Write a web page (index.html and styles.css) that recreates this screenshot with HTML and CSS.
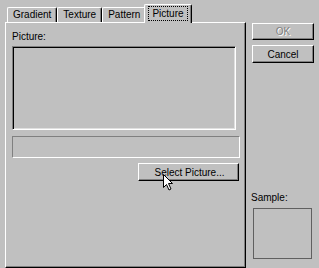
FILE: index.html
```html
<!DOCTYPE html>
<html lang="en">
<head>
    <meta charset="UTF-8">
    <meta name="viewport" content="width=device-width, initial-scale=1.0">
    <title>Fill Effects</title>
    <link rel="stylesheet" href="styles.css">
</head>
<body>
    <div id="dialog">
        <div id="leftSide">
            <div id="tabs">
                <div class="tab">Gradient</div>
                <div class="tab">Texture</div>
                <div class="tab">Pattern</div>
                <div class="tab selected"><span class="focusRect">Picture</span></div>
            </div>
            <div id="panel">
                <div class="label">Picture:</div>
                <div id="pictureBox"></div>
                <div id="fileField"></div>
                <button id="selectButton" class="button">Select Picture...</button>
                <!-- mouse pointer resting on the button -->
                <svg id="cursor" width="11" height="17" viewBox="0 0 11 17">
                    <path d="M0.5 0.5 L0.5 13.5 L3.5 10.5 L6 16 L8 15 L5.5 9.5 L9.5 9.5 Z" fill="#fff" stroke="#000" stroke-width="1"/>
                </svg>
            </div>
        </div>

        <div id="rightSide">
            <button class="button disabled">OK</button>
            <button class="button" id="cancelButton">Cancel</button>
            <div class="label" id="sampleLabel">Sample:</div>
            <div id="sampleBox"></div>
        </div>
    </div>
</body>
</html>
```

FILE: styles.css
```css
body {
    margin: 0;
    padding: 0;
    background-color: #c0c0c0;
    font-family: "Liberation Sans", Arial, sans-serif;
    font-size: 10px;
    color: #000;
    width: 319px;
    height: 268px;
    overflow: hidden;
}

#dialog {
    display: flex;
    padding: 4px 0 0 5px;
}

#leftSide {
    width: 241px;
}

#tabs {
    display: flex;
    align-items: flex-end;
    height: 18px;
    padding-left: 2px;
}

.tab {
    position: relative;
    height: 14px;
    line-height: 14px;
    padding: 0 5px 0 5px;
    border-top: 1px solid #fff;
    border-left: 1px solid #fff;
    border-right: 1px solid #000;
    border-radius: 2px 2px 0 0;
    box-shadow: inset -1px 0 0 #808080;
    white-space: nowrap;
}

.tab.selected {
    height: 18px;
    line-height: 17px;
    margin: 0 0 -1px -2px;
    padding: 0 3px 0 3px;
    background-color: #c0c0c0;
    z-index: 1;
}

.focusRect {
    display: inline-block;
    line-height: 11px;
    padding: 1px 3px;
    border: 1px dotted #000;
}

#panel {
    position: relative;
    height: 236px;
    padding: 8px 0 0 6px;
    border-top: 1px solid #fff;
    border-left: 1px solid #fff;
    border-right: 1px solid #000;
    border-bottom: 1px solid #000;
    box-shadow: inset -1px -1px 0 #808080;
    box-sizing: content-box;
    width: 233px;
}

.label {
    line-height: 12px;
    height: 12px;
}

#pictureBox {
    margin-top: 3px;
    width: 222px;
    height: 82px;
    border-top: 1px solid #808080;
    border-left: 1px solid #808080;
    border-right: 1px solid #fff;
    border-bottom: 1px solid #fff;
    box-shadow: inset 1px 1px 0 #000, inset -1px -1px 0 #dfdfdf;
}

#fileField {
    margin-top: 6px;
    width: 226px;
    height: 20px;
    border-top: 1px solid #808080;
    border-left: 1px solid #808080;
    border-right: 1px solid #fff;
    border-bottom: 1px solid #fff;
}

.button {
    display: block;
    margin: 0;
    padding: 0;
    font-family: inherit;
    font-size: 10px;
    color: #000;
    background-color: #c0c0c0;
    border-top: 1px solid #fff;
    border-left: 1px solid #fff;
    border-right: 1px solid #000;
    border-bottom: 1px solid #000;
    border-radius: 0;
    box-shadow: inset -1px -1px 0 #808080;
    box-sizing: border-box;
}

#selectButton {
    margin: 5px 0 0 126px;
    width: 101px;
    height: 18px;
    padding-left: 2px;
}

#cursor {
    position: absolute;
    left: 157px;
    top: 151px;
}

#rightSide {
    margin-left: 6px;
    padding-top: 19px;
}

#rightSide .button {
    width: 62px;
    height: 17px;
}

#cancelButton {
    margin-top: 5px;
    height: 18px !important;
}

.disabled {
    color: #808080 !important;
    text-shadow: 1px 1px 0 #fff;
}

#sampleLabel {
    margin-top: 129px;
    margin-left: -1px;
}

#sampleBox {
    margin: 4px 0 0 1px;
    width: 57px;
    height: 49px;
    border: 1px solid #606060;
}
```
